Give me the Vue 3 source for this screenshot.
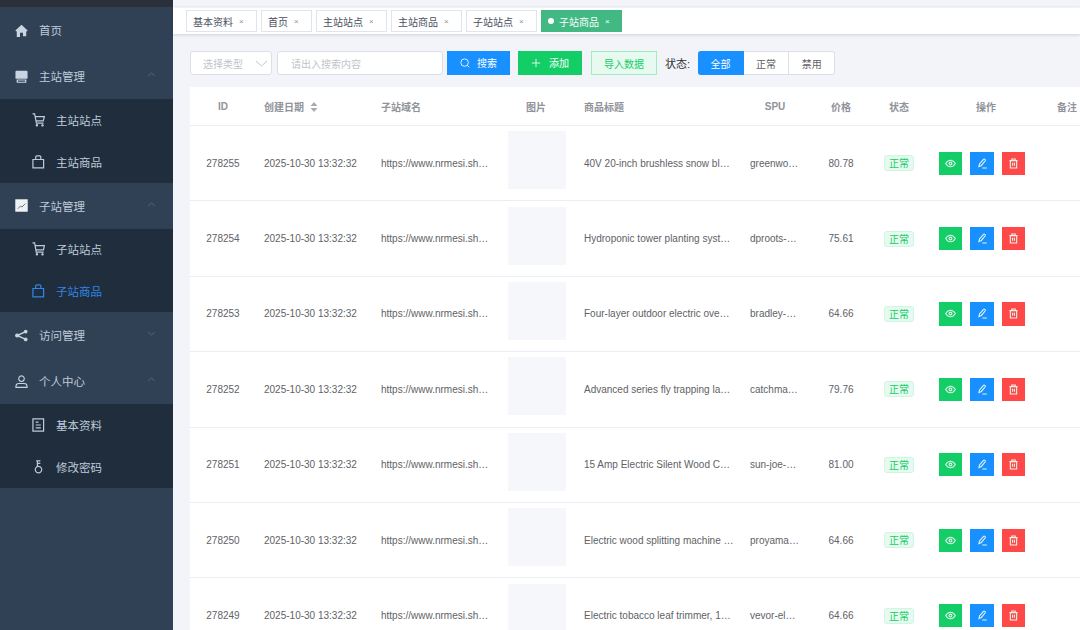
<script setup>
const tags = [
  { name: '基本资料' }, { name: '首页' }, { name: '主站站点' }, { name: '主站商品' }, { name: '子站站点' }, { name: '子站商品', active: true },
]
const menu = [
  { name: '首页', icon: 'home' },
  { name: '主站管理', icon: 'store', open: true, children: [
    { name: '主站站点', icon: 'cart' }, { name: '主站商品', icon: 'bag' } ] },
  { name: '子站管理', icon: 'chart', open: true, children: [
    { name: '子站站点', icon: 'cart2' }, { name: '子站商品', icon: 'bag', active: true } ] },
  { name: '访问管理', icon: 'share', open: false },
  { name: '个人中心', icon: 'user', open: true, children: [
    { name: '基本资料', icon: 'doc' }, { name: '修改密码', icon: 'key' } ] },
]
const iconPaths = {
  cart: 'M.5 1h2.300l2 9.800h7.700M3.500 3.800h9.800l-1.200 4.700H4.400M4.600 13.200a.7.7 0 1 0 1.400 0a.7.7 0 1 0-1.400 0M10.600 13.200a.7.7 0 1 0 1.400 0a.7.7 0 1 0-1.400 0',
  cart2: 'M.5 1h2.300l1.800 9.800h8M3.200 3.800h10.100l-1 4.700H4.100M4.600 13.200a.7.7 0 1 0 1.400 0a.7.7 0 1 0-1.400 0M10.600 13.200a.7.7 0 1 0 1.400 0a.7.7 0 1 0-1.400 0',
  bag: 'M1 4.800h11.500v9H1zM4 4.800V2.200a1.200 1.200 0 0 1 1.200-1.200h3.100a1.200 1.200 0 0 1 1.200 1.200v2.600',
  doc: 'M1 .8h11.500v13.400H1zM4 4.300h3M4 7.500h5.500M4 10.700h5.500',
  key: 'M4.500.8h4.500M5.800.8v6M5.800 3.600h3.200M7 6.800a3.500 3.500 0 1 1-.01 0z',
  user: 'M7 1a3 3 0 1 1-.01 0zM1 13.300v-1c0-1.900 1.700-3.100 3.200-3.100h5.600c1.500 0 3.200 1.200 3.200 3.100v1z',
}
const rows = [
  { id: 278255, title: '40V 20-inch brushless snow bl…', spu: 'greenwo…', price: '80.78' },
  { id: 278254, title: 'Hydroponic tower planting syst…', spu: 'dproots-…', price: '75.61' },
  { id: 278253, title: 'Four-layer outdoor electric ove…', spu: 'bradley-…', price: '64.66' },
  { id: 278252, title: 'Advanced series fly trapping la…', spu: 'catchma…', price: '79.76' },
  { id: 278251, title: '15 Amp Electric Silent Wood C…', spu: 'sun-joe-…', price: '81.00' },
  { id: 278250, title: 'Electric wood splitting machine …', spu: 'proyama…', price: '64.66' },
  { id: 278249, title: 'Electric tobacco leaf trimmer, 1…', spu: 'vevor-el…', price: '64.66' },
]
</script>

<template>
  <div class="page">
    <aside class="sidebar">
      <div class="strip"></div>
      <template v-for="m in menu" :key="m.name">
        <div class="top-item">
          <svg class="top-icon" viewBox="0 0 14 14" aria-hidden="true">
            <path v-if="m.icon === 'home'" class="fill" d="M7 .8 13.600 7l-.9 1-.6-.5v5.700H8.600V9.400H5.400v4.800H1.900V7.500l-.6.5-.9-1z" />
            <path v-else-if="m.icon === 'store'" class="fill" d="M1.500.8h11a1 1 0 0 1 1 1v7.600H.5V1.800a1 1 0 0 1 1-1zM1.800 10.200h10.400v3.500H1.800zM3.200 11.200v1.400h7.600v-1.400z" fill-rule="evenodd" />
            <template v-else-if="m.icon === 'chart'">
              <rect class="whitebg" x="0.300" y="0.300" width="13.400" height="13.400" />
              <path class="darkline" d="M3 10.500 6 7.500l1.500 1.200L11 5" />
            </template>
            <template v-else-if="m.icon === 'share'">
              <circle class="fill" cx="11.500" cy="2.800" r="2" />
              <circle class="fill" cx="11.500" cy="11.200" r="2" />
              <circle class="fill" cx="2.300" cy="7" r="2.200" />
              <path class="line thick" d="M11.500 2.800 2.300 7l9.200 4.200" />
            </template>
            <path v-else class="line" :d="iconPaths.user" />
          </svg>
          <span class="top-label">{{ m.name }}</span>
          <svg v-if="m.children || m.open === false" class="chevron" :class="{ up: m.open }" viewBox="0 0 10 6" aria-hidden="true">
            <path d="M1 1l4 4 4-4" />
          </svg>
        </div>
        <div v-if="m.children" class="submenu">
          <div v-for="c in m.children" :key="c.name" class="sub-item" :class="{ active: c.active }">
            <svg class="sub-icon" viewBox="0 0 14 15" aria-hidden="true"><path :d="iconPaths[c.icon]" /></svg>
            <span>{{ c.name }}</span>
          </div>
        </div>
      </template>
    </aside>

    <main class="main">
      <nav class="tagbar">
        <div v-for="t in tags" :key="t.name" class="tag" :class="{ active: t.active }">
          <i v-if="t.active" class="dot"></i>
          <span>{{ t.name }}</span>
          <b class="close">×</b>
        </div>
      </nav>

      <section class="content">
        <div class="toolbar">
          <div class="select">
            <span>选择类型</span>
            <svg class="select-arrow" viewBox="0 0 13 7" aria-hidden="true"><path d="M1 1l5.500 5L12 1" /></svg>
          </div>
          <div class="input">请出入搜索内容</div>
          <button class="btn search">
            <svg class="btn-icon" viewBox="0 0 12 12" aria-hidden="true"><circle cx="5.500" cy="5.500" r="4.500" /><path d="M8.800 8.800l2.400 2.400" /></svg>
            <span>搜索</span>
          </button>
          <button class="btn add">
            <svg class="btn-icon" viewBox="0 0 12 12" aria-hidden="true"><path d="M6 1v10M1 6h10" /></svg>
            <span>添加</span>
          </button>
          <button class="btn import">导入数据</button>
          <span class="status-label">状态:</span>
          <div class="radio">
            <span class="radio-item on">全部</span>
            <span class="radio-item">正常</span>
            <span class="radio-item">禁用</span>
          </div>
        </div>

        <div class="table">
          <div class="row head">
            <div class="c center">ID</div>
            <div class="c date">创建日期
              <svg class="sort" viewBox="0 0 8 10" aria-hidden="true"><path d="M4 0l3.500 4h-7zM4 10 .5 6h7z" /></svg>
            </div>
            <div class="c">子站域名</div>
            <div class="c center">图片</div>
            <div class="c">商品标题</div>
            <div class="c center">SPU</div>
            <div class="c center">价格</div>
            <div class="c center">状态</div>
            <div class="c op-head">操作</div>
            <div class="c center">备注</div>
          </div>
          <div v-for="r in rows" :key="r.id" class="row body">
            <div class="c center">{{ r.id }}</div>
            <div class="c date">2025-10-30 13:32:32</div>
            <div class="c">https://www.nrmesi.sh…</div>
            <div class="c thumb-cell"><div class="thumb"></div></div>
            <div class="c">{{ r.title }}</div>
            <div class="c">{{ r.spu }}</div>
            <div class="c center">{{ r.price }}</div>
            <div class="c center"><span class="state">正常</span></div>
            <div class="c ops">
              <span class="op green">
                <svg viewBox="0 0 14 14" aria-hidden="true"><path d="M.8 7c1.700-2.800 3.700-4.200 6.200-4.200S11.500 4.200 13.200 7c-1.700 2.800-3.700 4.200-6.200 4.200S2.500 9.800.8 7z" /><circle cx="7" cy="7" r="1.800" /></svg>
              </span>
              <span class="op blue">
                <svg viewBox="0 0 14 14" aria-hidden="true"><path d="M2.500 11 3.200 7.600 8.300 1.700c.9-.9 3 .6 2.200 1.800L5.600 9.500zM6.800 12.700h5.700" /></svg>
              </span>
              <span class="op red">
                <svg viewBox="0 0 14 14" aria-hidden="true"><path d="M1.800 3.300h10.400M4.800 3.300V1.300h4.400v2M3 3.300v9.400h8V3.300M5.800 6v4M8.200 6v4" /></svg>
              </span>
            </div>
            <div class="c"></div>
          </div>
        </div>
      </section>
    </main>
  </div>
</template>

<style>
html, body { margin: 0; padding: 0; overflow: hidden; }
</style>

<style scoped>
.page {
  display: flex;
  width: 1080px;
  height: 630px;
  overflow: hidden;
  background: #f3f4f9;
  font-family: "Liberation Sans", "Noto Sans CJK SC", sans-serif;
  font-size: 10px;
  color: #606266;
}
.sidebar {
  flex: 0 0 173px;
  background: #304156;
  color: #bfcbd9;
}
.strip { height: 7px; background: #2b2f3a; }
.top-item {
  display: flex;
  align-items: center;
  height: 46px;
  padding: 0 15px;
  font-size: 11.500px;
}
.top-icon { width: 13px; height: 13px; margin-right: 11px; flex: none; }
.top-label { flex: 1; }
.fill { fill: #c9d4e0; }
.line { fill: none; stroke: #c9d4e0; stroke-width: 1.200; }
.line.thick { stroke-width: 1.500; }
.whitebg { fill: #eef1f5; }
.darkline { fill: none; stroke: #5b6b7e; stroke-width: 1; }
.chevron { width: 9px; height: 5px; fill: none; stroke: #55677c; stroke-width: 1.200; margin-right: 2px; margin-top: -3px; }
.chevron.up { transform: rotate(180deg); }
.submenu { background: #1f2d3d; }
.sub-item {
  display: flex;
  align-items: center;
  height: 41.800px;
  padding-left: 32px;
  font-size: 11.500px;
}
.sub-item.active { color: #2f86e6; }
.sub-icon { width: 13px; height: 14px; margin-right: 11px; fill: none; stroke: currentColor; stroke-width: 1.300; flex: none; }

.main { flex: 1; min-width: 0; display: flex; flex-direction: column; }
.tagbar {
  display: flex;
  align-items: center;
  gap: 4px;
  height: 27px;
  margin-top: 7px;
  padding-left: 13px;
  background: #fff;
  box-shadow: 0 1px 3px rgba(0, 21, 41, 0.16);
  border-top: 1px solid #f0f2f5;
  box-sizing: border-box;
}
.tag {
  display: flex;
  align-items: center;
  height: 22px;
  padding: 0 11px 0 6px;
  box-sizing: border-box;
  background: #fff;
  border: 1px solid #dfe4ed;
  color: #495060;
}
.tag.active { background: #42b983; border-color: #42b983; color: #fff; padding-right: 10px; }
.dot { width: 6px; height: 6px; border-radius: 50%; background: #fff; margin-right: 5px; }
.close { font-size: 8px; font-weight: 400; margin-left: 6px; width: 6px; color: #8a8f99; }
.tag.active .close { color: #fff; }

.content { flex: 1; padding: 17px 0 0 17px; min-height: 0; }
.toolbar { display: flex; align-items: center; height: 24px; }
.select, .input {
  display: flex;
  align-items: center;
  height: 24px;
  box-sizing: border-box;
  border: 1px solid #dcdfe6;
  border-radius: 3px;
  background: #fff;
  color: #c0c4cc;
}
.select { width: 82px; padding: 0 3px 0 12px; justify-content: space-between; margin-right: 5px; }
.select-arrow { width: 13px; height: 7px; fill: none; stroke: #c0c4cc; stroke-width: 1; }
.input { width: 166px; padding-left: 13px; margin-right: 4px; }
.btn {
  display: flex;
  align-items: center;
  justify-content: center;
  height: 24px;
  padding: 0;
  border: 1px solid transparent;
  border-radius: 0;
  font: inherit;
  color: #fff;
  box-sizing: border-box;
}
.btn span { margin-top: -2px; }
.btn-icon { width: 10px; height: 10px; fill: none; stroke: #fff; stroke-width: 1; margin-right: 7px; }
.search { width: 63px; background: #1890ff; margin-right: 8px; }
.add { width: 64px; background: #13ce66; margin-right: 9px; }
.add span { margin-left: 1px; }
.import { width: 66px; background: #e7faf0; border-color: #a1ebc2; color: #13ce66; margin-right: 8px; }
.status-label { color: #303133; margin-right: 8px; font-size: 11px; }
.radio { display: flex; height: 24px; }
.radio-item {
  display: flex;
  align-items: center;
  justify-content: center;
  width: 45.700px;
  box-sizing: border-box;
  background: #fff;
  border: 1px solid #dcdfe6;
  border-left: 0;
}
.radio-item:last-child { border-radius: 0 3px 3px 0; }
.radio-item.on { background: #1890ff; border-color: #1890ff; color: #fff; border-radius: 3px 0 0 3px; }

.table { margin-top: 12px; width: 907px; background: #fff; }
.row {
  display: grid;
  grid-template-columns: 66px 115px 127px 76px 166px 70px 62px 54px 111px 60px;
  align-items: center;
  box-sizing: border-box;
  border-bottom: 1px solid #ebeef5;
}
.head { height: 39px; color: #909399; font-weight: 700; }
.body { height: 75.400px; }
.c { padding: 0 0 0 10px; min-width: 0; white-space: nowrap; }
.c.date { padding-left: 8px; }
.center { text-align: center; padding: 0; }
.sort { width: 8px; height: 10px; fill: #a8abb2; margin-left: 3px; vertical-align: -1px; }
.thumb { width: 58px; height: 58px; margin-bottom: 6px; background: #f5f7fa; }
.state {
  display: inline-block;
  padding: 0 4px;
  height: 16px;
  line-height: 15px;
  box-sizing: border-box;
  border: 1px solid #d0f5e0;
  border-radius: 3px;
  background: #e7faf0;
  color: #13ce66;
}
.op-head { padding-left: 50px; }
.ops { display: flex; gap: 8.200px; padding: 0 0 0 13px; }
.op {
  display: flex;
  align-items: center;
  justify-content: center;
  width: 23.300px;
  height: 23.300px;
  flex: none;
}
.op svg { width: 11px; height: 11px; fill: none; stroke: #e4f5ec; stroke-width: 1.400; }
.green { background: #13ce66; }
.blue { background: #1890ff; }
.red { background: #ff4949; }
</style>
